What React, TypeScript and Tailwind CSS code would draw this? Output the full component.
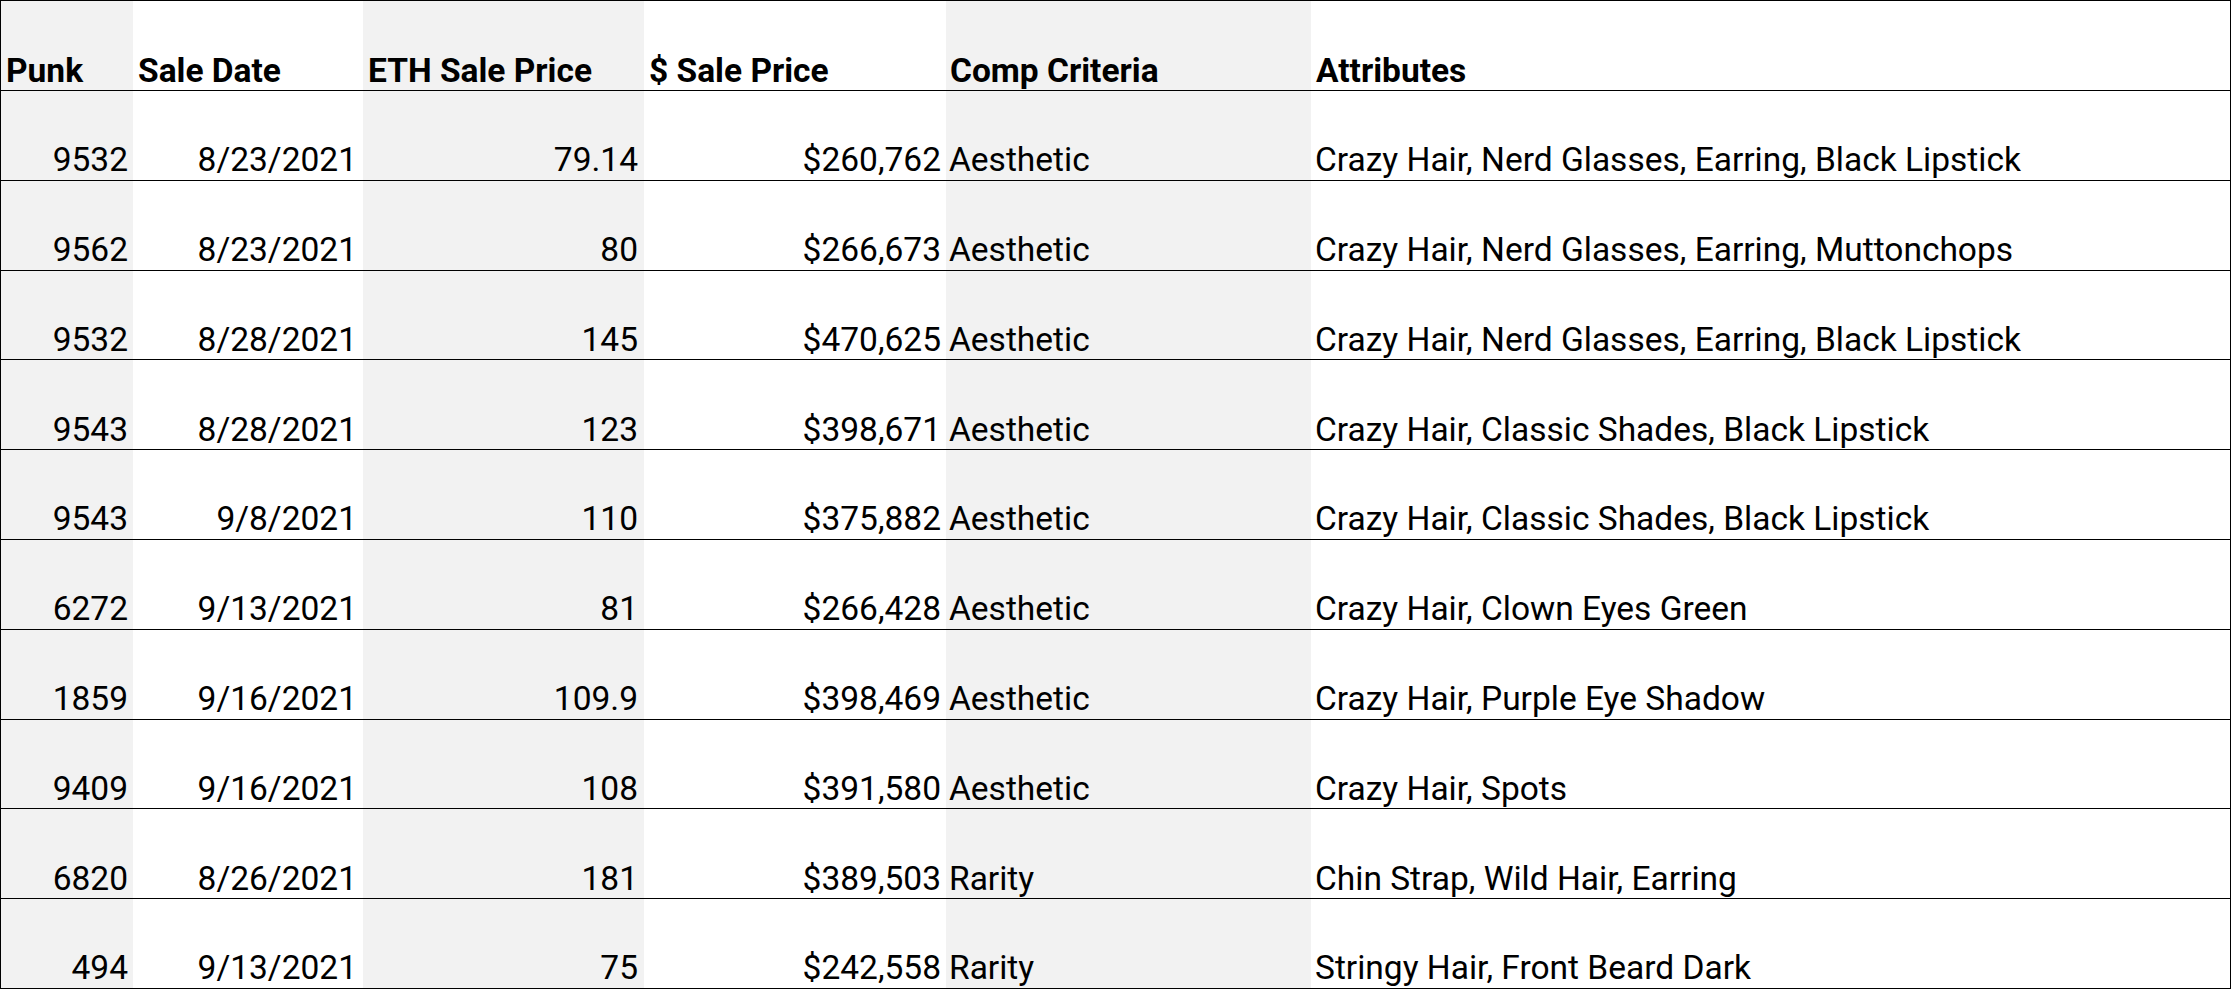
const rows = [
  ["9532", "8/23/2021", "79.14", "$260,762", "Aesthetic", "Crazy Hair, Nerd Glasses, Earring, Black Lipstick"],
  ["9562", "8/23/2021", "80", "$266,673", "Aesthetic", "Crazy Hair, Nerd Glasses, Earring, Muttonchops"],
  ["9532", "8/28/2021", "145", "$470,625", "Aesthetic", "Crazy Hair, Nerd Glasses, Earring, Black Lipstick"],
  ["9543", "8/28/2021", "123", "$398,671", "Aesthetic", "Crazy Hair, Classic Shades, Black Lipstick"],
  ["9543", "9/8/2021", "110", "$375,882", "Aesthetic", "Crazy Hair, Classic Shades, Black Lipstick"],
  ["6272", "9/13/2021", "81", "$266,428", "Aesthetic", "Crazy Hair, Clown Eyes Green"],
  ["1859", "9/16/2021", "109.9", "$398,469", "Aesthetic", "Crazy Hair, Purple Eye Shadow"],
  ["9409", "9/16/2021", "108", "$391,580", "Aesthetic", "Crazy Hair, Spots"],
  ["6820", "8/26/2021", "181", "$389,503", "Rarity", "Chin Strap, Wild Hair, Earring"],
  ["494", "9/13/2021", "75", "$242,558", "Rarity", "Stringy Hair, Front Beard Dark"],
];

const headers = ["Punk", "Sale Date", "ETH Sale Price", "$ Sale Price", "Comp Criteria", "Attributes"];

// column look: background + alignment + padding
const cols = [
  "bg-[#f2f2f2] justify-end pr-[5px]",
  "justify-end pr-[6px]",
  "bg-[#f2f2f2] justify-end pr-[6px]",
  "justify-end pr-[5px]",
  "bg-[#f2f2f2] justify-start pl-[3px]",
  "justify-start pl-[4px]",
];

const headCols = [
  "bg-[#f2f2f2] pl-[5px]",
  "pl-[5px]",
  "bg-[#f2f2f2] pl-[5px]",
  "pl-[5px]",
  "bg-[#f2f2f2] pl-[4px]",
  "pl-[5px]",
];

const grid = "grid grid-cols-[132px_230px_281px_302px_365px_1fr]";

export default function App() {
  return (
    <div className="w-[2231px] bg-white font-['Roboto',sans-serif] text-[33.5px] leading-none text-black">
      <div className="border-x border-t border-black">
        <div className={`${grid} h-[90px] border-b border-black font-bold`}>
          {headers.map((h, i) => (
            <div key={h} className={`flex items-end pb-[3px] ${headCols[i]}`}>
              {h}
            </div>
          ))}
        </div>
        {rows.map((r, ri) => (
          <div key={ri} className={`${grid} h-[89.8px] border-b border-black`}>
            {r.map((c, ci) => (
              <div key={ci} className={`flex items-end pb-[3px] ${cols[ci]}`}>
                {c}
              </div>
            ))}
          </div>
        ))}
      </div>
    </div>
  );
}
